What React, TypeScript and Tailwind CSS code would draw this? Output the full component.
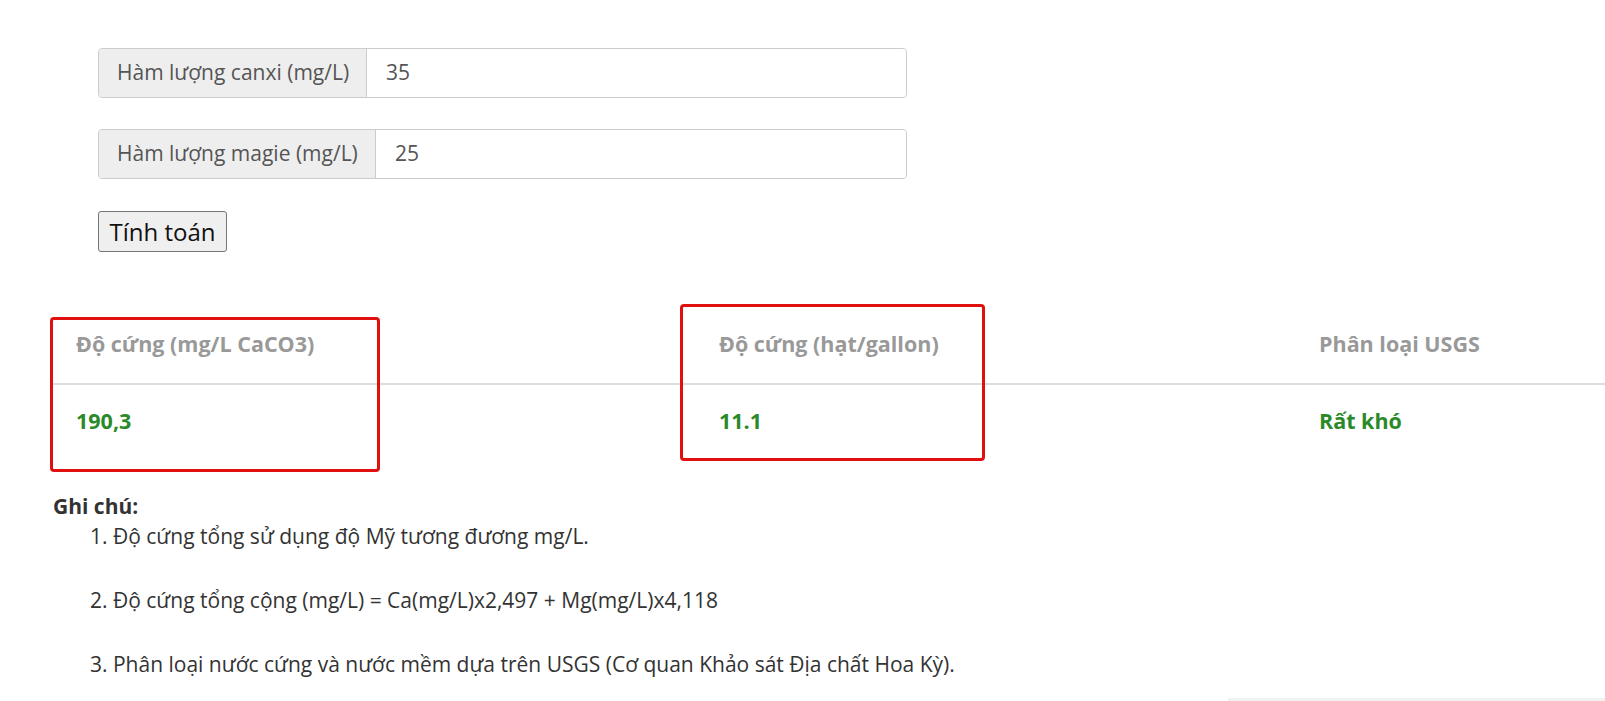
import React from "react";

const font = { fontFamily: '"Open Sans", "Noto Sans", sans-serif' };

function InputRow({ label, value, labelWidth }: { label: string; value: string; labelWidth: string }) {
  return (
    <div className="flex h-[50px] w-[809px] rounded-[4px] border border-[#ccc]">
      <div className={`flex items-center bg-[#eee] pl-[18px] text-[21px] text-[#555] border-r border-[#ccc] rounded-l-[4px] ${labelWidth}`}>{label}</div>
      <div className="flex flex-1 items-center bg-white pl-[19px] text-[21px] text-[#555] rounded-r-[4px]">{value}</div>
    </div>
  );
}

export default function App() {
  return (
    <div className="relative h-[701px] w-[1605px] overflow-hidden bg-white" style={font}>
      <div className="flex flex-col pl-[98px] pt-[48px]">
        <InputRow label="Hàm lượng canxi (mg/L)" value="35" labelWidth="w-[268px]" />
        <div className="h-[31px]" />
        <InputRow label="Hàm lượng magie (mg/L)" value="25" labelWidth="w-[277px]" />
        <div className="mt-[32px]">
          <button className="h-[41px] w-[129px] rounded-[3px] border border-[#767676] bg-[#efefef] text-[24px] text-[#111] leading-none">
            Tính toán
          </button>
        </div>
      </div>

      {/* results table */}
      <div className="ml-[51px] mt-[54px] w-[1600px]">
        <div className="grid grid-cols-[643px_600px_1fr] border-b-2 border-[#ddd] h-[79px] items-center text-[21.5px] font-bold text-[#999]">
          <div className="pl-[25px]">Độ cứng (mg/L CaCO3)</div>
          <div className="pl-[25px]">Độ cứng (hạt/gallon)</div>
          <div className="pl-[25px]">Phân loại USGS</div>
        </div>
        <div className="grid grid-cols-[643px_600px_1fr] h-[72px] items-center text-[21.5px] font-bold text-[#2a8a2a]">
          <div className="pl-[25px]">190,3</div>
          <div className="pl-[25px]">11.1</div>
          <div className="pl-[25px]">Rất khó</div>
        </div>
      </div>

      <div className="ml-[53px] mt-[34px] text-[21px] text-[#333]">
        <div className="font-bold leading-[30px]">Ghi chú:</div>
        <ol className="pl-[37px] leading-[30px]">
          <li>1. Độ cứng tổng sử dụng độ Mỹ tương đương mg/L.</li>
          <li className="mt-[34px]">2. Độ cứng tổng cộng (mg/L) = Ca(mg/L)x2,497 + Mg(mg/L)x4,118</li>
          <li className="mt-[34px]">3. Phân loại nước cứng và nước mềm dựa trên USGS (Cơ quan Khảo sát Địa chất Hoa Kỳ).</li>
        </ol>
      </div>

      {/* highlight boxes */}
      <div className="absolute left-[50px] top-[317px] h-[155px] w-[330px] rounded-[4px] border-[3px] border-[#e01010]" />
      <div className="absolute left-[680px] top-[304px] h-[157px] w-[305px] rounded-[4px] border-[3px] border-[#e01010]" />
      <div className="absolute left-[1228px] top-[698px] h-[3px] w-[377px] bg-[#f2f2f2]" />
    </div>
  );
}
